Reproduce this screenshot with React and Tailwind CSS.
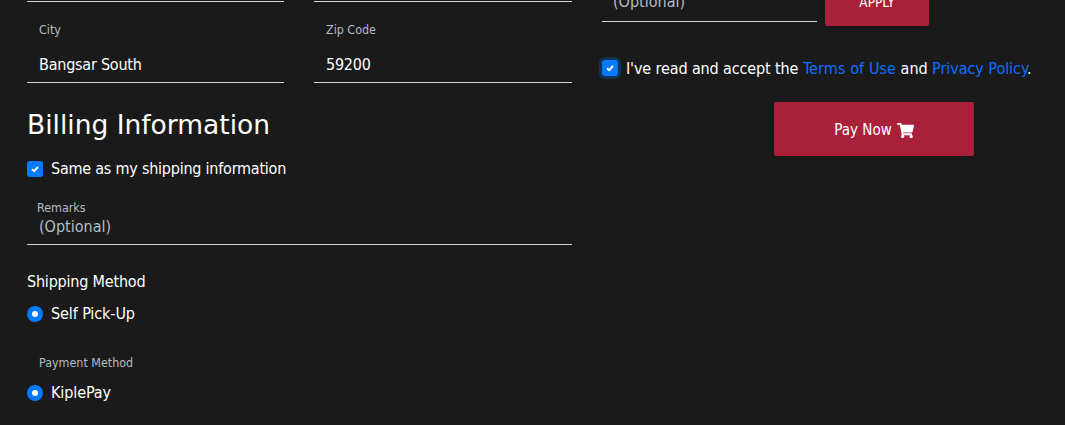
import { FaShoppingCart } from "react-icons/fa";

function CheckBox({ ring }) {
  return (
    <span
      className={`flex h-4 w-4 shrink-0 items-center justify-center rounded-[3px] bg-[#007bff] ${
        ring ? "shadow-[0_0_0_3px_rgba(0,123,255,0.25)]" : ""
      }`}
    >
      <svg width="10" height="10" viewBox="0 0 10 10" fill="none">
        <path d="M2 5.2 4.2 7.2 8 3" stroke="#fff" strokeWidth="2" />
      </svg>
    </span>
  );
}

function Radio({ label }) {
  return (
    <div className="flex h-6 items-center gap-2 text-[16px] tracking-[-0.1px] text-white">
      <span className="flex h-4 w-4 items-center justify-center rounded-full bg-[#007bff]">
        <span className="h-[6px] w-[6px] rounded-full bg-white" />
      </span>
      {label}
    </div>
  );
}

function Field({ label, value, className }) {
  return (
    <div className={className}>
      <div className="pl-3 pt-[19px] text-[12.4px] leading-[18px] text-[#b4bcc4]">{label}</div>
      <div className="flex h-[44px] items-center border-b border-[#ced4da] pl-3 pt-[8px] text-[16px] tracking-[-0.23px] text-white">
        {value}
      </div>
    </div>
  );
}

export default function App() {
  return (
    <div className="flex h-[425px] w-[1065px] overflow-hidden bg-[#1a1a1a] font-['DejaVu_Sans',sans-serif] font-stretch-condensed">
      {/* left column */}
      <div className="ml-[27px] w-[545px]">
        <div className="flex gap-[30px]">
          <div className="h-[2px] w-[257px] border-b border-[#ced4da]" />
          <div className="h-[2px] w-[258px] border-b border-[#ced4da]" />
        </div>
        <div className="flex gap-[30px]">
          <Field className="w-[257px]" label="City" value="Bangsar South" />
          <Field className="w-[258px]" label="Zip Code" value="59200" />
        </div>

        <h2 className="mt-[22px] text-[26.5px] leading-[40px] font-stretch-normal text-white">Billing Information</h2>

        <div className="mt-[12px] flex h-6 items-center gap-2 text-[16px] tracking-[-0.23px] text-white">
          <CheckBox />
          Same as my shipping information
        </div>

        <div className="mt-[19px] border-b border-[#ced4da] pb-[7px]">
          <div className="pl-[10px] text-[12.4px] leading-[16px] text-[#b4bcc4]">Remarks</div>
          <div className="pl-3 pt-[1px] text-[16px] leading-[20px] text-[#b4bcc4]">(Optional)</div>
        </div>

        <div className="mt-[25px] text-[16px] leading-6 tracking-[-0.2px] text-white">Shipping Method</div>
        <div className="mt-[8px]">
          <Radio label="Self Pick-Up" />
        </div>
        <div className="mt-[28px] pl-3 text-[12.4px] leading-[18px] text-[#b4bcc4]">Payment Method</div>
        <div className="mt-[9px]">
          <Radio label="KiplePay" />
        </div>
      </div>

      {/* right column */}
      <div className="ml-[30px] w-[430px]">
        <div className="-mt-[20px] flex gap-2">
          <div className="flex h-[42px] w-[215px] items-center border-b border-[#ced4da] pl-[11px] pt-[3px] text-[16px] text-[#b4bcc4]">
            (Optional)
          </div>
          <div className="flex h-[46px] w-[104px] items-center justify-center rounded-[2px] bg-[#a92139] pb-[2px] text-[13.5px] text-white shadow-md">
            APPLY
          </div>
        </div>

        <div className="mt-[30px] flex h-6 items-center gap-2 whitespace-nowrap text-[16px] tracking-[-0.05px] text-white">
          <CheckBox ring />
          <span className="pt-[2px]">
            <span className="tracking-[-0.12px]">I've read and accept the</span>{" "}
            <span className="text-[#0d6efd] tracking-[0.1px]">Terms of Use</span> and{" "}
            <span className="text-[#0d6efd]">Privacy Policy</span>.
          </span>
        </div>

        <button className="ml-[172px] mt-[22px] flex h-[54px] w-[200px] items-center justify-center gap-[5px] rounded-[2px] bg-[#a92139] pt-[2px] text-[15px] text-white shadow-md">
          Pay Now
          <FaShoppingCart size={17} />
        </button>
      </div>
    </div>
  );
}
